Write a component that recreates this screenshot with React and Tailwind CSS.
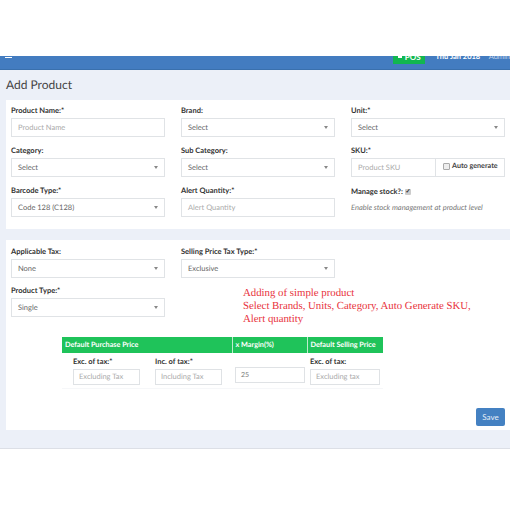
import React from "react";

const sans = "font-['Lato',sans-serif] [text-rendering:geometricPrecision]";

const Label = ({ children }) => (
  <label className="block h-[18px] pt-[5px] text-[7.5px] leading-[12px] font-bold text-[#333]">
    {children}
  </label>
);

const Select = ({ value }) => (
  <div className="flex h-[19px] items-center justify-between border border-[#e0e3e6] bg-white pl-[6px] pr-[6px] text-[7.5px] text-[#666]">
    <span>{value}</span>
    <span className="h-0 w-0 border-x-[2.5px] border-t-[3px] border-x-transparent border-t-[#888]" />
  </div>
);

const Input = ({ placeholder }) => (
  <div className="flex h-[19px] items-center border border-[#e0e3e6] bg-white pl-[6px] text-[7.5px] text-[#aaa]">
    {placeholder}
  </div>
);

const SmallInput = ({ placeholder, dark }) => (
  <div
    className={`flex h-[16px] items-center border border-[#dfe2e5] bg-white pl-[5px] ${
      dark ? "text-[7px] text-[#777]" : "text-[7.5px] text-[#aaa]"
    }`}
  >
    {placeholder}
  </div>
);

const Field = ({ label, children }) => (
  <div className="h-[40px]">
    <Label>{label}</Label>
    {children}
  </div>
);

const TaxField = ({ label, placeholder }) => (
  <div>
    <div className="h-[16px] pt-[3px] text-[7.5px] leading-[12px] font-bold text-[#333]">
      {label}
    </div>
    <SmallInput placeholder={placeholder} />
  </div>
);

const App = () => {
  return (
    <div className={`h-[510px] w-[510px] overflow-hidden bg-white ${sans}`}>
      <div className="h-[56px]" />
      {/* top bar, cut off by the crop */}
      <header className="flex h-[14px] items-start overflow-hidden border-b border-[#3a70ad] bg-[#437cc0] text-white">
        <div className="ml-[5px] mt-[1px] h-[1px] w-[7px] bg-white" />
        <div className="ml-[381px] flex h-[8px] w-[33px] items-start justify-center gap-[3px] bg-[#12b650] text-[8px] leading-[2px] font-bold">
          <span className="h-[2px] w-[4px] bg-white" />
          <span>POS</span>
        </div>
        <div className="ml-[10px] w-[46px] text-[7.5px] leading-[2px] font-bold whitespace-nowrap">
          Thu Jan 2018
        </div>
        <div className="ml-[8px] text-[7.5px] leading-[2px] whitespace-nowrap text-[#c5d6ec]">
          Admin
        </div>
      </header>

      <main className="h-[379px] border-b border-[#dcdfe6] bg-[#ecf0f8] pl-[6px]">
        <h1 className="h-[30px] pt-[6px] text-[12px] leading-[18px] text-[#444]">
          Add Product
        </h1>

        <section className="h-[129px] bg-white px-[5px]">
          <div className="grid grid-cols-3 gap-x-4">
            <Field label="Product Name:*">
              <Input placeholder="Product Name" />
            </Field>
            <Field label="Brand:">
              <Select value="Select" />
            </Field>
            <Field label="Unit:*">
              <Select value="Select" />
            </Field>

            <Field label="Category:">
              <Select value="Select" />
            </Field>
            <Field label="Sub Category:">
              <Select value="Select" />
            </Field>
            <Field label="SKU:*">
              <div className="flex h-[19px] border border-[#e0e3e6] bg-white">
                <div className="flex w-[84px] items-center border-r border-[#e0e3e6] pl-[6px] text-[7.5px] text-[#aaa]">
                  Product SKU
                </div>
                <div className="flex items-center gap-[2px] pb-[2px] pl-[7px] font-bold text-[#444]">
                  <span className="h-[7px] w-[7px] rounded-[1px] border border-[#aaa] bg-[#eee]" />
                  <span className="text-[7.2px] whitespace-nowrap">Auto generate</span>
                </div>
              </div>
            </Field>

            <Field label="Barcode Type:*">
              <Select value="Code 128 (C128)" />
            </Field>
            <Field label="Alert Quantity:*">
              <Input placeholder="Alert Quantity" />
            </Field>
            <div>
              <div className="flex h-[18px] items-center gap-[2px] pt-[5px] text-[7.5px] font-bold text-[#333]">
                Manage stock?:
                <span className="flex h-[6px] w-[6px] items-center justify-center rounded-[1px] bg-[#ccc] text-[6px] leading-none text-[#333]">
                  ✓
                </span>
              </div>
              <p className="pt-[4px] text-[7.5px] leading-[12px] text-[#777] italic whitespace-nowrap">
                Enable stock management at product level
              </p>
            </div>
          </div>
        </section>

        <section className="mt-[11px] h-[190px] bg-white px-[5px] pt-[1px]">
          <div className="grid grid-cols-3 gap-x-4">
            <div className="h-[39px]">
              <Label>Applicable Tax:</Label>
              <Select value="None" />
            </div>
            <div className="h-[39px]">
              <Label>Selling Price Tax Type:*</Label>
              <Select value="Exclusive" />
            </div>
            <div />
            <Field label="Product Type:*">
              <Select value="Single" />
            </Field>
            <div className="col-span-2 pl-[62px] pt-[7px] font-['Liberation_Serif',serif] text-[10.8px] leading-[13px] text-[#e8323c] whitespace-nowrap">
              Adding of simple product
              <br />
              Select Brands, Units, Category, Auto Generate SKU,
              <br />
              Alert quantity
            </div>
          </div>

          <table className="mt-[11px] ml-[51px] w-[321px] table-fixed border-collapse text-[7.25px]">
            <thead>
              <tr className="h-[16px] bg-[#1fc35a] text-left font-bold text-white">
                <th className="w-[170px] border-r border-[#bfeccd] pl-[3px]">
                  Default Purchase Price
                </th>
                <th className="w-[75px] border-r border-[#bfeccd] pl-[3px]">x Margin(%)</th>
                <th className="pl-[3px]">Default Selling Price</th>
              </tr>
            </thead>
            <tbody>
              <tr className="h-[35px] border-b border-[#f6f7f9]">
                <td className="align-top">
                  <div className="flex gap-[15px] pl-[11px]">
                    <div className="w-[67px]">
                      <TaxField label="Exc. of tax:*" placeholder="Excluding Tax" />
                    </div>
                    <div className="w-[67px]">
                      <TaxField label="Inc. of tax:*" placeholder="Including Tax" />
                    </div>
                  </div>
                </td>
                <td className="pl-[3px] pr-[2px] pt-[14px] align-top">
                  <SmallInput placeholder="25" dark />
                </td>
                <td className="pl-[3px] align-top">
                  <div className="w-[70px]">
                    <TaxField label="Exc. of tax:" placeholder="Excluding tax" />
                  </div>
                </td>
              </tr>
            </tbody>
          </table>

          <div className="mt-[19px] flex justify-end">
            <button className="flex h-[18px] w-[29px] items-center justify-center rounded-[2px] bg-[#4481c2] text-[8px] text-[#e8f0f8]">
              Save
            </button>
          </div>
        </section>
      </main>
    </div>
  );
};

export default App;
